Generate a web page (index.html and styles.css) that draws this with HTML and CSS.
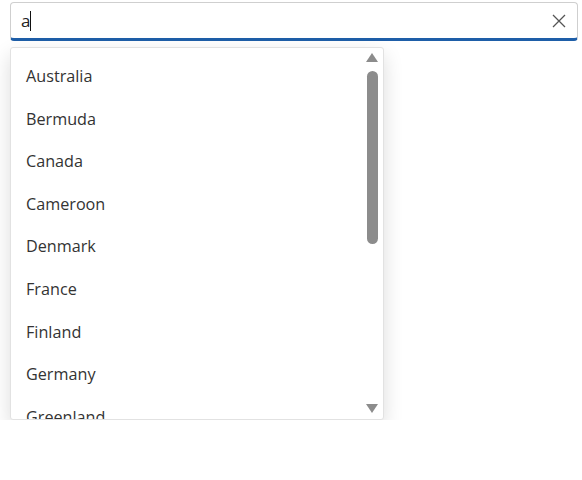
FILE: index.html
```html
<!DOCTYPE html>
<html>
<head>
    <title>Country search</title>
    <link rel="stylesheet" href="styles.css">
</head>
<body>
<div class="combo">
    <div class="field">
        <span class="value">a</span><span class="caret"></span>
        <span class="clear">
            <svg width="14" height="14" viewBox="0 0 14 14"><path d="M1 1L13 13M13 1L1 13" stroke="#555" stroke-width="1.3" fill="none"/></svg>
        </span>
    </div>
    <div class="popup">
        <ul class="list">
            <li>Australia</li>
            <li>Bermuda</li>
            <li>Canada</li>
            <li>Cameroon</li>
            <li>Denmark</li>
            <li>France</li>
            <li>Finland</li>
            <li>Germany</li>
            <li>Greenland</li>
        </ul>
        <div class="scrollbar">
            <span class="arrow up"></span>
            <span class="track"><span class="thumb"></span></span>
            <span class="arrow down"></span>
        </div>
    </div>
</div>
</body>
</html>
```
FILE: styles.css
```css
body {
    margin: 0;
    padding: 2px 4px 0 10px;
    background: #fff;
    font-family: "Segoe UI", "Open Sans", sans-serif;
    color: #333;
}

.field {
    display: flex;
    align-items: center;
    height: 35px;
    padding: 0 10px;
    border: 1px solid #cfcfcf;
    border-bottom: 3px solid #1e5ea8;
    border-radius: 4px;
    font-size: 17px;
    color: #222;
}

.value {
    line-height: 20px;
}

.caret {
    width: 1px;
    height: 20px;
    background: #111;
}

.clear {
    margin-left: auto;
    display: flex;
    margin-right: 1px;
}

.popup {
    display: flex;
    width: 372px;
    height: 371px;
    margin-top: 6px;
    border: 1px solid #e2e2e2;
    border-radius: 3px;
    background: #fff;
    box-shadow: 0 8px 20px rgba(0, 0, 0, 0.14);
    overflow: hidden;
}

.list {
    flex: 1;
    list-style: none;
    margin: 0;
    padding: 7px 0 0 0;
    overflow: hidden;
}

.list li {
    height: 42.6px;
    line-height: 42.6px;
    padding-left: 15px;
    font-size: 16.2px;
}

.scrollbar {
    display: flex;
    flex-direction: column;
    align-items: center;
    width: 18px;
    padding: 5px 2px 6px 0;
}

.arrow {
    width: 0;
    height: 0;
    border-left: 6px solid transparent;
    border-right: 6px solid transparent;
}

.arrow.up {
    border-bottom: 9px solid #8c8c8c;
}

.arrow.down {
    border-top: 9px solid #8c8c8c;
}

.track {
    flex: 1;
    width: 11px;
    padding-top: 9px;
}

.thumb {
    display: block;
    height: 173px;
    border-radius: 6px;
    background: #8c8c8c;
}
```
